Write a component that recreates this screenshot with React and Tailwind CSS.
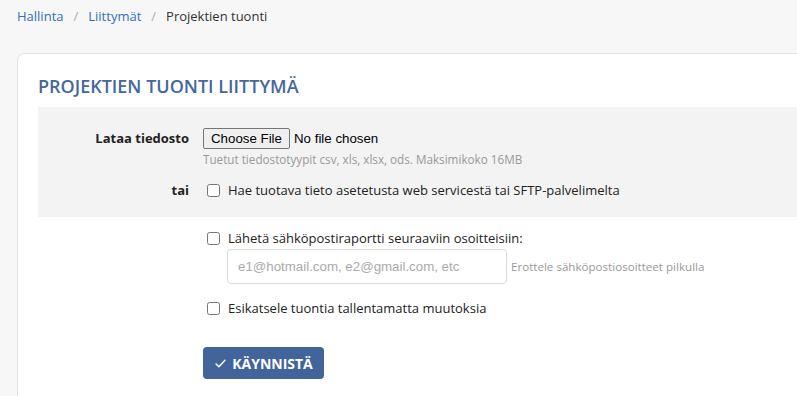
import React from "react";

function Check({ className = "" }) {
  return <input type="checkbox" className={"m-0 h-[13px] w-[13px] shrink-0 " + className} />;
}

export default function App() {
  return (
    <div className="min-h-[396px] w-[797px] overflow-hidden bg-[#f7f7f7] text-[13px] text-[#333]" style={{ fontFamily: '"Open Sans", sans-serif' }}>
      <nav className="flex items-center px-[17px] pt-[6px] leading-[20px]">
        <a className="text-[#2f6fbf]">Hallinta</a>
        <span className="px-[10px] text-[#aaa]">/</span>
        <a className="text-[#2f6fbf]">Liittymät</a>
        <span className="px-[10px] text-[#aaa]">/</span>
        <span className="text-[#333]">Projektien tuonti</span>
      </nav>
      <div className="ml-[17px] mt-[27px] w-[800px] rounded-tl-[8px] border border-r-0 border-[#e3e3e3] bg-white pl-[20px] pb-[40px]">
        <h1 className="pt-[19px] pb-[8px] text-[18px] font-semibold leading-[26px] text-[#44679d]">PROJEKTIEN TUONTI LIITTYMÄ</h1>
        <div className="bg-[#f3f3f3] pt-[21px] pb-[17px]">
          <div className="grid grid-cols-[165px_1fr]">
            <div className="pr-[14px] text-right font-bold leading-[21px] text-[#222]">Lataa tiedosto</div>
            <div>
              <div className="flex items-center" style={{ fontFamily: '"Liberation Sans", Arial, sans-serif' }}>
                <span className="box-border flex h-[21px] w-[87px] items-center justify-center rounded-[2px] border border-[#767676] bg-[#efefef] text-[13.3px] text-black">Choose File</span>
                <span className="ml-[4px] text-[13.3px] text-black">No file chosen</span>
              </div>
              <div className="mt-[2px] text-[11.7px] leading-[16px] text-[#999]">Tuetut tiedostotyypit csv, xls, xlsx, ods. Maksimikoko 16MB</div>
            </div>
            <div className="mt-[13px] pr-[14px] text-right font-bold leading-[20px] text-[#222]">tai</div>
            <div className="mt-[13px] flex items-center pl-[4px] leading-[20px]">
              <Check />
              <span className="ml-[8px] text-[#222]">Hae tuotava tieto asetetusta web servicestä tai SFTP-palvelimelta</span>
            </div>
          </div>
        </div>
        <div className="pl-[165px]">
          <div className="mt-[11px] flex items-center pl-[4px] leading-[20px]">
            <Check />
            <span className="ml-[8px] text-[#222]">Lähetä sähköpostiraportti seuraaviin osoitteisiin:</span>
          </div>
          <div className="mt-[1px] flex items-center pl-[24px]">
            <div className="box-border flex h-[35px] w-[280px] items-center rounded-[4px] border border-[#dcdcdc] bg-white pl-[10px] text-[13.3px] text-[#aaa]" style={{ fontFamily: '"Liberation Sans", Arial, sans-serif' }}>e1@hotmail.com, e2@gmail.com, etc</div>
            <span className="ml-[4px] text-[11.6px] text-[#999]">Erottele sähköpostiosoitteet pilkulla</span>
          </div>
          <div className="mt-[14px] flex items-center pl-[4px] leading-[20px]">
            <Check />
            <span className="ml-[8px] text-[#222]">Esikatsele tuontia tallentamatta muutoksia</span>
          </div>
          <button className="mt-[29px] flex h-[32px] w-[121px] items-center justify-center gap-[5px] rounded-[4px] bg-[#42649b] text-[14px] font-bold text-white">
            <svg width="13" height="13" viewBox="0 0 16 16" fill="none" stroke="white" strokeWidth="1.8" strokeLinecap="round" strokeLinejoin="round"><path d="M2.5 8.5l3.5 3.5 7.5-8" /></svg>
            <span>KÄYNNISTÄ</span>
          </button>
        </div>
      </div>
    </div>
  );
}
